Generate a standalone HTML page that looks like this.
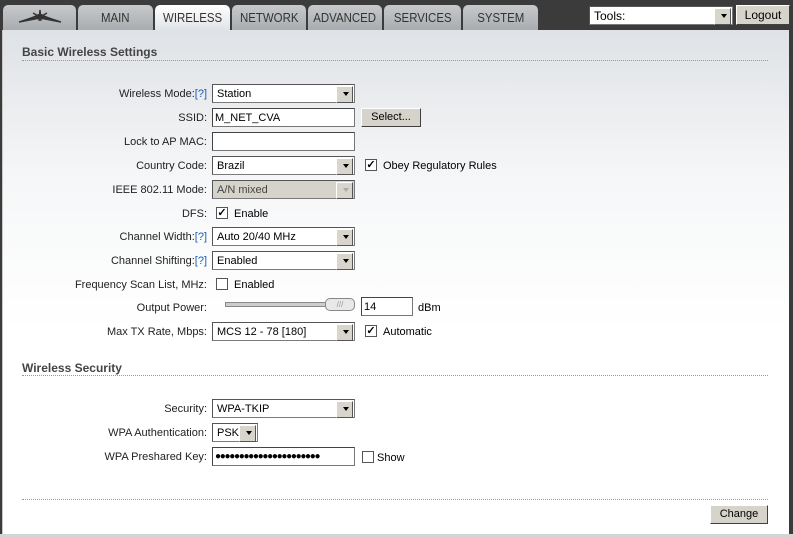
<!DOCTYPE html><html><head><style>
*{box-sizing:border-box}
body{margin:0;width:793px;height:538px;background:#3b3b3b;font-family:"Liberation Sans",sans-serif;font-size:11px;color:#000;position:relative;overflow:hidden}
.panel{position:absolute;left:2px;top:30px;width:787px;height:504px;background:linear-gradient(#dfe2e6 0,#f6f7f8 150px,#fff 300px);border-left:1px solid #c8c8c8}
.bot{position:absolute;left:0;top:534px;width:793px;height:4px;background:#d4d4d4}
.tab{position:absolute;top:5px;height:25px;background:linear-gradient(#c7c9cb,#a9acaf);border-radius:5px 5px 0 0;font-size:13px;color:#333;text-align:center;line-height:26px}
.tab span{display:inline-block;transform:scaleX(.88)}
.tab.act{background:linear-gradient(#fff,#e0e3e6);color:#333}
.h{position:absolute;left:22px;font-weight:bold;font-size:12px;color:#444}
.dot{position:absolute;left:22px;width:746px;border-top:1px dotted #999}
.lab{position:absolute;right:586px;text-align:right;white-space:nowrap;color:#222}
.lab a{color:#1a5fb4}
.sel{position:absolute;left:212px;width:143px;height:19px;border:1px solid #7a7a7a;border-top-color:#555;border-left-color:#555;background:#fff;padding:2px 4px;line-height:15px;white-space:nowrap}
.sel:after{content:"";position:absolute;right:1px;top:1px;width:15px;height:15px;background:#d8d5cc;border:1px solid;border-color:#fff #555 #555 #fff}
.sel i{position:absolute;right:5px;top:7px;border:3.5px solid transparent;border-top:4px solid #000;z-index:2}
.inp{position:absolute;left:212px;width:143px;height:19px;border:1px solid #777;border-top-color:#444;border-left-color:#444;background:#fff;padding:2px 2px;line-height:15px}
.cb{position:absolute;width:12px;height:12px;border:1px solid #555;background:#fff;font-size:11px;line-height:10px;text-align:center;font-weight:bold}
.t{position:absolute;white-space:nowrap}
.btn{position:absolute;background:#d6d3ca;border:1px solid;border-color:#fff #404040 #404040 #fff;text-align:center;line-height:17px;font-size:11px}
</style></head><body>
<div class="panel"></div><div class="bot"></div>
<div class="tab" style="left:3px;width:73px"><svg width="50" height="20" viewBox="0 0 50 20" style="margin-top:3px"><path d="M4 14 Q20 9 25 6 Q30 9 46 14 Q30 11 25 10 Q20 11 4 14Z M25 2 L26 12 L24 12Z M18 5 L25 9 M32 5 L25 9" stroke="#333" stroke-width="1.4" fill="#333"/></svg></div>
<div class="tab" style="left:78px;width:75px"><span>MAIN</span></div>
<div class="tab act" style="left:155px;width:75px"><span>WIRELESS</span></div>
<div class="tab" style="left:232px;width:74px"><span>NETWORK</span></div>
<div class="tab" style="left:308px;width:74px"><span>ADVANCED</span></div>
<div class="tab" style="left:384px;width:77px"><span>SERVICES</span></div>
<div class="tab" style="left:463px;width:75px"><span>SYSTEM</span></div>
<div class="sel" style="left:589px;top:6px;width:144px;height:19px;font-size:12px">Tools:<i></i></div>
<div class="btn" style="left:736px;top:5px;width:54px;height:20px;font-size:12px;line-height:18px">Logout</div>

<div class="h" style="top:45px">Basic Wireless Settings</div>
<div class="dot" style="top:60px"></div>

<div class="lab" style="top:88px">Wireless Mode:<a>[?]</a></div><div class="sel" style="top:84px">Station<i></i></div>
<div class="lab" style="top:112px">SSID:</div><div class="inp" style="top:108px">M_NET_CVA</div>
<div class="btn" style="left:361px;top:108px;width:60px;height:19px">Select...</div>
<div class="lab" style="top:136px">Lock to AP MAC:</div><div class="inp" style="top:132px"></div>
<div class="lab" style="top:160px">Country Code:</div><div class="sel" style="top:156px">Brazil<i></i></div>
<div class="cb" style="left:365px;top:159px">✓</div><div class="t" style="left:383px;top:160px">Obey Regulatory Rules</div>
<div class="lab" style="top:184px">IEEE 802.11 Mode:</div><div class="sel" style="top:180px;background:#d6d3ca;color:#444">A/N mixed<i style="border-top-color:#aaa"></i></div>
<div class="lab" style="top:208px">DFS:</div><div class="cb" style="left:216px;top:207px">✓</div><div class="t" style="left:234px;top:208px">Enable</div>
<div class="lab" style="top:231px">Channel Width:<a>[?]</a></div><div class="sel" style="top:227px">Auto 20/40 MHz<i></i></div>
<div class="lab" style="top:255px">Channel Shifting:<a>[?]</a></div><div class="sel" style="top:251px">Enabled<i></i></div>
<div class="lab" style="top:279px">Frequency Scan List, MHz:</div><div class="cb" style="left:216px;top:278px"></div><div class="t" style="left:234px;top:279px">Enabled</div>
<div class="lab" style="top:302px">Output Power:</div>
<div style="position:absolute;left:225px;top:302px;width:105px;height:5px;background:#ccc;border:1px solid #888"></div>
<div style="position:absolute;left:325px;top:298px;width:30px;height:13px;background:#e8e8e8;border:1px solid #888;border-radius:5px;font-size:8px;color:#999;text-align:center;line-height:11px">///</div>
<div class="inp" style="left:361px;top:297px;width:52px">14</div><div class="t" style="left:418px;top:302px">dBm</div>
<div class="lab" style="top:326px">Max TX Rate, Mbps:</div><div class="sel" style="top:322px">MCS 12 - 78 [180]<i></i></div>
<div class="cb" style="left:365px;top:325px">✓</div><div class="t" style="left:383px;top:326px">Automatic</div>

<div class="h" style="top:361px">Wireless Security</div>
<div class="dot" style="top:375px"></div>
<div class="lab" style="top:403px">Security:</div><div class="sel" style="top:399px">WPA-TKIP<i></i></div>
<div class="lab" style="top:427px">WPA Authentication:</div><div class="sel" style="top:423px;width:46px">PSK<i></i></div>
<div class="lab" style="top:451px">WPA Preshared Key:</div><div class="inp" style="top:447px;font-size:10px;letter-spacing:-1.3px;overflow:hidden;padding-top:1px">●●●●●●●●●●●●●●●●●●●●●●</div>
<div class="cb" style="left:362px;top:451px"></div><div class="t" style="left:377px;top:452px">Show</div>

<div class="dot" style="top:499px"></div>
<div class="btn" style="left:710px;top:505px;width:58px;height:19px">Change</div>
</body></html>
